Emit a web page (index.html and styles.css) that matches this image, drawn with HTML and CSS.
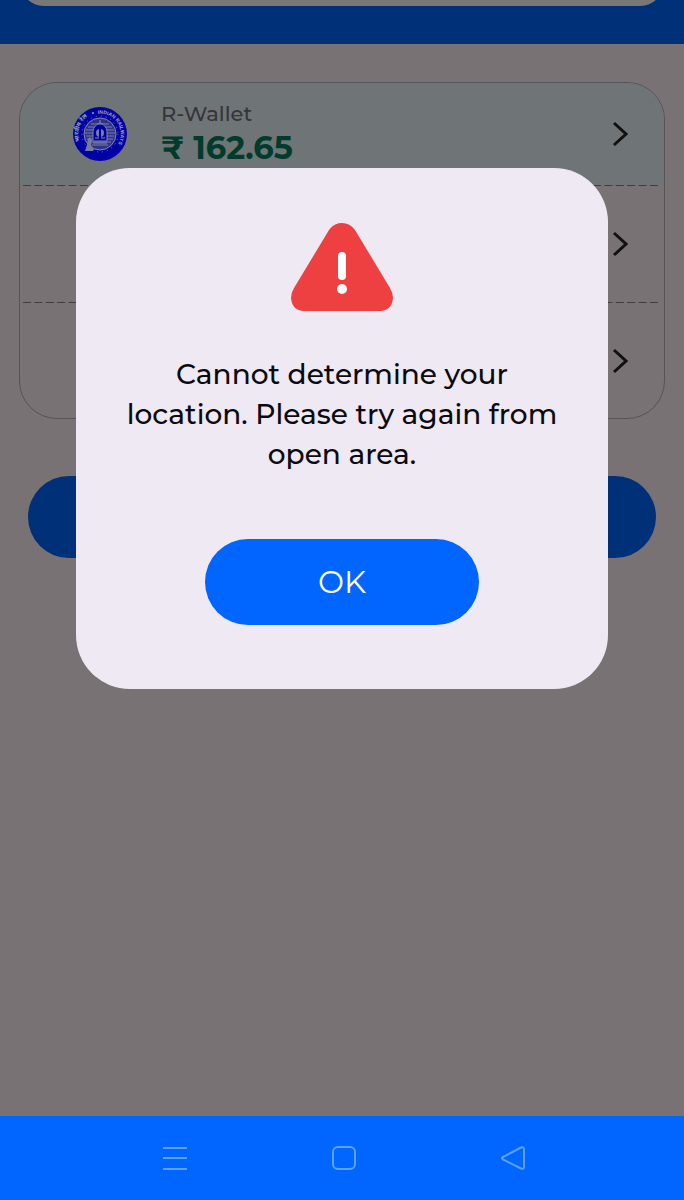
FILE: index.html
```html
<!DOCTYPE html>
<html lang="en">
<head>
    <meta charset="UTF-8">
    <meta name="viewport" content="width=device-width, initial-scale=1">
    <title>R-Wallet</title>
    <link rel="stylesheet" href="styles.css">
</head>
<body>
<header class="header">
    <input class="search" type="text" aria-label="Search">
</header>
<main class="main">
    <div class="card">
        <button class="row wallet" type="button">
            <svg class="logo" viewBox="0 0 54 54" aria-hidden="true">
                <defs>
                    <path id="ring-left" d="M7 34A20 20 0 0 1 21 7"/>
                    <path id="ring-right" d="M25 7A20 20 0 0 1 36 45"/>
                </defs>
                <circle cx="27" cy="27" r="27" fill="#0000a6"/>
                <g class="logo-text">
                    <text class="hindi"><textPath href="#ring-left">भारतीय रेल</textPath></text>
                    <text><textPath href="#ring-right">INDIAN RAILWAYS</textPath></text>
                </g>
                <circle cx="20" cy="6" r="1" fill="#9a9eb0"/>
                <circle cx="27" cy="27" r="18" fill="none" stroke="#777c9c" stroke-width="1" stroke-dasharray="1 4"/>
                <circle cx="27" cy="27" r="16" fill="#31318f" stroke="#858aa0" stroke-width="1"/>
                <path d="M18 17h18M15 20h24M13 23h28M12 26h30M13 29h28M14 32h26M16 35h22M19 38h16" stroke="#7b80a0" stroke-width="1"/>
                <path d="M20 34V24q1-6 7-8q6 2 7 8v10z" fill="#0000a6" stroke="#7b80a0" stroke-width="1"/>
                <circle cx="27" cy="26" r="4" fill="#777c9c"/>
                <path d="M27 13v4M24 17h6M22 31h10M20 36h14" stroke="#858aa0" stroke-width="1"/>
                <path d="M27 22v10" stroke="#0000a6" stroke-width="2"/>
                <path d="M12 44l2-6 1-6 2-2 2 3-1 5 3 4-1 2z" fill="#777c9c"/>
            </svg>
            <span class="info">
                <span class="name">R-Wallet</span>
                <span class="amount">₹ 162.65</span>
            </span>
            <svg class="chevron" viewBox="0 0 16 26" aria-hidden="true"><path d="M2 2l12 11L2 24"/></svg>
        </button>
        <svg class="dashes" aria-hidden="true"><line x1="0" y1="0.5" x2="100%" y2="0.5"/></svg>
        <button class="row" type="button" aria-label="Payment option">
            <svg class="chevron" viewBox="0 0 16 26" aria-hidden="true"><path d="M2 2l12 11L2 24"/></svg>
        </button>
        <svg class="dashes" aria-hidden="true"><line x1="0" y1="0.5" x2="100%" y2="0.5"/></svg>
        <button class="row" type="button" aria-label="Payment option">
            <svg class="chevron" viewBox="0 0 16 26" aria-hidden="true"><path d="M2 2l12 11L2 24"/></svg>
        </button>
    </div>
    <button class="submit" type="button" aria-label="Continue"></button>
</main>
<nav class="navbar">
    <button class="nav-btn" type="button" aria-label="Recent apps">
        <svg viewBox="0 0 26 26"><path d="M1 3h24M1 13h24M1 24h24"/></svg>
    </button>
    <button class="nav-btn" type="button" aria-label="Home">
        <svg viewBox="0 0 26 26"><rect x="2" y="2" width="22" height="22" rx="5"/></svg>
    </button>
    <button class="nav-btn" type="button" aria-label="Back">
        <svg viewBox="0 0 26 26"><path d="M3 12L21 2.500Q24 1.500 24 4V22Q24 24.500 21 23.500L3 14.500Q1 13 3 12z"/></svg>
    </button>
</nav>
<div class="overlay">
    <div class="dialog" role="alertdialog" aria-modal="true" aria-describedby="message">
        <svg class="warning" viewBox="0 0 102 90" aria-hidden="true">
            <path d="M38 8Q43 1 51 1Q59 1 64 8L99 66Q102 71 102 76Q101 88 90 89H12Q1 88 0 76Q0 71 3 66z" fill="#ee4041"/>
            <path d="M51 34v20" stroke="#fff" stroke-width="8" stroke-linecap="round"/>
            <circle cx="51" cy="67" r="5" fill="#fff"/>
        </svg>
        <p class="message" id="message">Cannot determine your location. Please try again from open area.</p>
        <button class="ok" type="button">OK</button>
    </div>
</div>
</body>
</html>
```
FILE: styles.css
```css
* {
    box-sizing: border-box;
}

body {
    display: flex;
    flex-direction: column;
    min-height: 100vh;
    margin: 0;
    background: #787275;
    font-family: Montserrat, Inter, "Noto Sans", sans-serif;
}

button {
    border: 0;
    padding: 0;
    font-family: inherit;
    cursor: pointer;
}

.header {
    display: flex;
    align-items: flex-end;
    height: 44px;
    padding: 0 20px 38px;
    background: #003077;
    overflow: hidden;
}

.search {
    flex: 1;
    height: 60px;
    border: 0;
    border-radius: 24px;
    background: #787878;
}

.main {
    flex: 1;
    padding: 38px 19px;
}

.card {
    border: 1px solid #565257;
    border-radius: 38px;
    overflow: hidden;
}

.row {
    display: flex;
    align-items: center;
    justify-content: flex-end;
    width: 100%;
    height: 116px;
    padding: 0 36px 0 53px;
    background: none;
}

.row:last-child {
    height: 115px;
}

.wallet {
    height: 102px;
    background: #6f7477;
    text-align: left;
}

.logo {
    width: 54px;
    height: 54px;
}

.logo-text {
    fill: #a4a8b6;
    font-family: "Liberation Sans", "Noto Sans", sans-serif;
    font-size: 5px;
    font-weight: bold;
}

.hindi {
    font-size: 6px;
}

.info {
    display: flex;
    flex: 1;
    flex-direction: column;
    margin-left: 34px;
}

.name {
    color: #343638;
    font-size: 21px;
    font-weight: 500;
    line-height: 28px;
}

.amount {
    color: #003c2c;
    font-size: 32px;
    font-weight: bold;
    line-height: 40px;
}

.chevron {
    width: 16px;
    height: 26px;
    fill: none;
    stroke: #111;
    stroke-width: 3;
}

.dashes {
    display: block;
    width: calc(100% - 8px);
    height: 1px;
    margin-left: 3px;
    stroke: #403c40;
    stroke-width: 1;
    stroke-dasharray: 8 3.4;
}

.submit {
    display: block;
    width: calc(100% - 18px);
    height: 82px;
    margin: 57px auto 0;
    border-radius: 41px;
    background: #003077;
}

.navbar {
    display: flex;
    justify-content: center;
    gap: 143px;
    padding: 29px 0 29px 4px;
    background: #06f;
}

.nav-btn {
    width: 26px;
    height: 26px;
    background: none;
}

.nav-btn svg {
    display: block;
    fill: none;
    stroke: #5ea2ff;
    stroke-width: 2;
}

.overlay {
    position: fixed;
    top: 168px;
    left: 76px;
    right: 76px;
}

.dialog {
    display: flex;
    flex-direction: column;
    align-items: center;
    padding: 54px 44px 64px;
    border-radius: 54px;
    background: #efe9f4;
}

.warning {
    width: 102px;
    height: 90px;
}

.message {
    margin: 42px 0 65px;
    color: #0b0a0e;
    font-size: 28px;
    font-weight: 500;
    line-height: 40px;
    text-align: center;
}

.ok {
    width: 274px;
    height: 86px;
    border-radius: 43px;
    background: #06f;
    color: #fff;
    font-size: 31px;
}
```
